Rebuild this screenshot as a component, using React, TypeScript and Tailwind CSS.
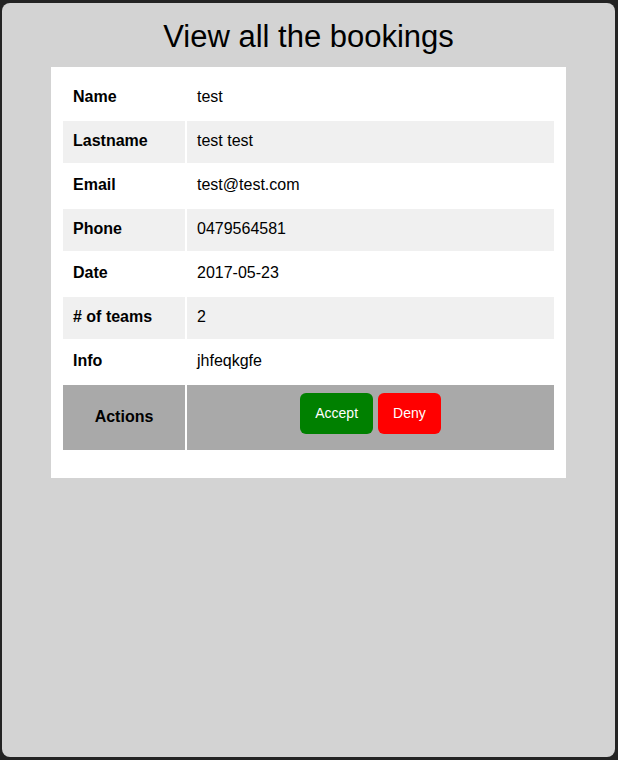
const rows = [
  { label: 'Name', value: 'test' },
  { label: 'Lastname', value: 'test test' },
  { label: 'Email', value: 'test@test.com' },
  { label: 'Phone', value: '0479564581' },
  { label: 'Date', value: '2017-05-23' },
  { label: '# of teams', value: '2' },
  { label: 'Info', value: 'jhfeqkgfe' },
];

export default function App() {
  return (
    <div
      className="w-[618px] h-[760px] bg-[#232323] pt-[3px] pl-[2px] pr-[3px] pb-[3px]"
      style={{ fontFamily: '"Liberation Sans", Arial, sans-serif' }}
    >
      <div className="h-full rounded-[8px] bg-[#d3d3d3] flex flex-col items-center">
        <h1 className="mt-[15px] text-[31px] leading-[37px] text-black">View all the bookings</h1>
        <div className="mt-[12px] w-[515px] bg-white pt-[8px] pl-[10px] pr-[10px] pb-[26px]">
          <table className="w-full border-separate border-spacing-[2px] text-[16px] text-black">
            <tbody>
              {rows.map((row, i) => (
                <tr key={row.label} className={i % 2 === 1 ? 'bg-[#f0f0f0]' : ''}>
                  <td className="w-[122px] h-[42px] pl-[10px] pb-[2px] font-bold">{row.label}</td>
                  <td className="h-[42px] pl-[10px] pb-[2px]">{row.value}</td>
                </tr>
              ))}
              <tr className="bg-[#a9a9a9]">
                <td className="h-[65px] pb-[2px] text-center font-bold">Actions</td>
                <td className="h-[65px] pt-[8px] align-top text-center">
                  <button className="h-[41px] px-[15px] rounded-[6px] bg-[#008000] text-white text-[14px]">
                    Accept
                  </button>
                  <button className="ml-[5px] h-[41px] px-[15px] rounded-[6px] bg-[#ff0000] text-white text-[14px]">
                    Deny
                  </button>
                </td>
              </tr>
            </tbody>
          </table>
        </div>
      </div>
    </div>
  );
}
